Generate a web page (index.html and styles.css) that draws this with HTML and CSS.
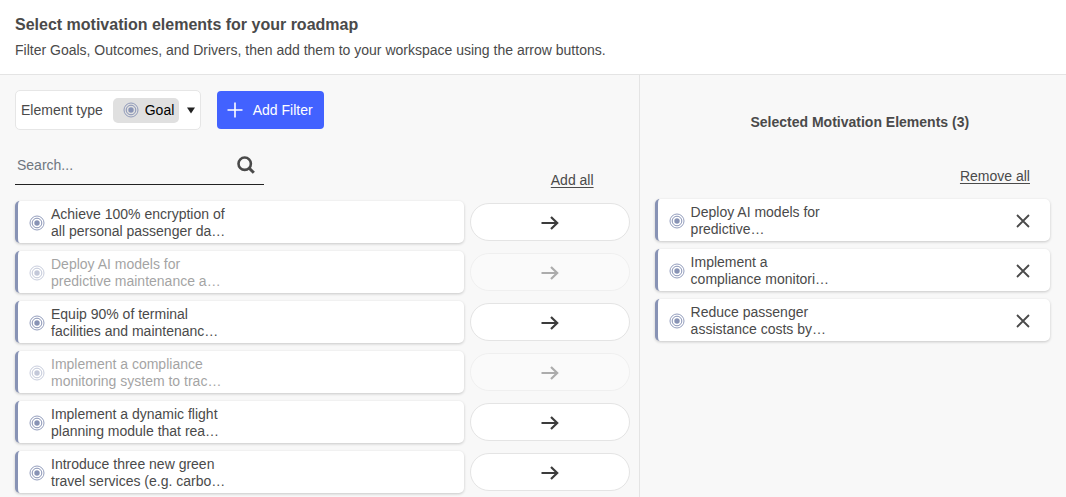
FILE: index.html
```
<!DOCTYPE html>
<html lang="en">
<head>
<meta charset="utf-8">
<meta name="viewport" content="width=device-width, initial-scale=1">
<title>Select motivation elements</title>
<link rel="stylesheet" href="styles.css">
</head>

<body>
<!-- shared icons -->
<svg class="sprite" aria-hidden="true">
  <symbol id="goal" viewBox="0 0 16 16">
    <circle cx="8" cy="8" r="7" fill="none" stroke="currentColor" stroke-width="0.9"/>
    <circle cx="8" cy="8" r="4.8" fill="none" stroke="currentColor" stroke-width="1"/>
    <circle cx="8" cy="8" r="2.7" fill="currentColor"/>
  </symbol>
  <symbol id="arrow" viewBox="0 0 18 14">
    <path d="M0.5 7H16.5M10 1L16.2 7L10 13" fill="none" stroke="currentColor" stroke-width="2.2"/>
  </symbol>
  <symbol id="cross" viewBox="0 0 14 14">
    <path d="M1 1L13 13M13 1L1 13" fill="none" stroke="currentColor" stroke-width="1.8"/>
  </symbol>
</svg>

<header class="header">
  <h1>Select motivation elements for your roadmap</h1>
  <p>Filter Goals, Outcomes, and Drivers, then add them to your workspace using the arrow buttons.</p>
</header>

<main class="columns">
  <section class="available">
    <div class="filters">
      <div class="filter">
        <label for="element-type">Element type</label>
        <span class="chip">
          <svg class="goal"><use href="#goal"/></svg>
          <select id="element-type">
            <option>Goal</option>
          </select>
        </span>
        <svg class="caret" viewBox="0 0 8 7"><path d="M0 0.5H8L4 6.5Z" fill="#222"/></svg>
      </div>
      <button class="add_filter" type="button">
        <svg viewBox="0 0 16 16"><path d="M8 0.5V15.5M0.5 8H15.5" stroke="#fff" stroke-width="1.6"/></svg>
        Add Filter
      </button>
    </div>

    <div class="tools">
      <form class="search">
        <input type="text" placeholder="Search..." aria-label="Search">
        <button type="button" aria-label="Search">
          <svg viewBox="0 0 18 18"><circle cx="7.7" cy="7.7" r="6.2" fill="none" stroke="currentColor" stroke-width="2.6"/><path d="M12 12L16.8 16.8" stroke="currentColor" stroke-width="3"/></svg>
        </button>
      </form>
      <a class="add_all" href="#">Add all</a>
    </div>

    <ul class="list">
      <li class="row">
        <div class="card"><svg class="goal"><use href="#goal"/></svg><p>Achieve 100% encryption of<br>all personal passenger da…</p></div>
        <button class="move" type="button" aria-label="Add"><svg><use href="#arrow"/></svg></button>
      </li>
      <li class="row used">
        <div class="card"><svg class="goal"><use href="#goal"/></svg><p>Deploy AI models for<br>predictive maintenance a…</p></div>
        <button class="move" type="button" aria-label="Add" disabled><svg><use href="#arrow"/></svg></button>
      </li>
      <li class="row">
        <div class="card"><svg class="goal"><use href="#goal"/></svg><p>Equip 90% of terminal<br>facilities and maintenanc…</p></div>
        <button class="move" type="button" aria-label="Add"><svg><use href="#arrow"/></svg></button>
      </li>
      <li class="row used">
        <div class="card"><svg class="goal"><use href="#goal"/></svg><p>Implement a compliance<br>monitoring system to trac…</p></div>
        <button class="move" type="button" aria-label="Add" disabled><svg><use href="#arrow"/></svg></button>
      </li>
      <li class="row">
        <div class="card"><svg class="goal"><use href="#goal"/></svg><p>Implement a dynamic flight<br>planning module that rea…</p></div>
        <button class="move" type="button" aria-label="Add"><svg><use href="#arrow"/></svg></button>
      </li>
      <li class="row">
        <div class="card"><svg class="goal"><use href="#goal"/></svg><p>Introduce three new green<br>travel services (e.g. carbo…</p></div>
        <button class="move" type="button" aria-label="Add"><svg><use href="#arrow"/></svg></button>
      </li>
    </ul>
  </section>

  <section class="selected">
    <h2>Selected Motivation Elements (3)</h2>
    <a class="remove_all" href="#">Remove all</a>
    <ul class="list">
      <li class="card">
        <svg class="goal"><use href="#goal"/></svg><p>Deploy AI models for<br>predictive…</p>
        <button class="remove" type="button" aria-label="Remove"><svg><use href="#cross"/></svg></button>
      </li>
      <li class="card">
        <svg class="goal"><use href="#goal"/></svg><p>Implement a<br>compliance monitori…</p>
        <button class="remove" type="button" aria-label="Remove"><svg><use href="#cross"/></svg></button>
      </li>
      <li class="card">
        <svg class="goal"><use href="#goal"/></svg><p>Reduce passenger<br>assistance costs by…</p>
        <button class="remove" type="button" aria-label="Remove"><svg><use href="#cross"/></svg></button>
      </li>
    </ul>
  </section>
</main>
</body>
</html>
```
FILE: styles.css
```
* {
  box-sizing: border-box;
}
body {
  margin: 0;
  min-height: 100vh;
  display: flex;
  flex-direction: column;
  background: #f8f8f8;
  color: #4a4a4a;
  font-family: "Liberation Sans", Arial, sans-serif;
  font-size: 14px;
  line-height: 17px;
}
h1, h2, p, ul {
  margin: 0;
  padding: 0;
}
button, input, select {
  font: inherit;
  color: inherit;
  margin: 0;
  padding: 0;
  border: none;
  background: none;
}
button {
  cursor: pointer;
}
a {
  color: inherit;
  text-underline-offset: 2px;
}
svg {
  display: block;
  flex: none;
}
.sprite {
  display: none;
}

.header {
  padding: 15px 15px 15px;
  background: #fff;
  border-bottom: 1px solid #e4e4e4;
}
.header h1 {
  font-size: 16px;
  line-height: 20px;
}
.header p {
  margin-top: 7px;
}

.columns {
  flex: 1;
  display: grid;
  grid-template-columns: 3fr 2fr;
}
.available {
  padding: 15px 9px 4px 15px;
  border-right: 1px solid #e4e4e4;
}
.selected {
  display: flex;
  flex-direction: column;
  padding: 39px 16px 4px 15px;
}

.filters {
  display: flex;
  align-items: center;
  gap: 16px;
}
.filter {
  display: flex;
  align-items: center;
  height: 40px;
  padding: 0 5px;
  background: #fff;
  border: 1px solid #e6e6e6;
  border-radius: 5px;
}
.chip {
  display: flex;
  align-items: center;
  gap: 6px;
  height: 25px;
  margin: 0 8px 0 10px;
  padding: 0 4px 0 10px;
  background: #e0e0e0;
  border-radius: 5px;
}
.chip select {
  appearance: none;
  color: #000;
}
.caret {
  width: 8px;
  height: 7px;
}
.goal {
  width: 16px;
  height: 16px;
  color: #8893b5;
}
.add_filter {
  display: flex;
  align-items: center;
  gap: 10px;
  height: 38px;
  padding: 0 11px 0 10px;
  background: #4262ff;
  border-radius: 4px;
  color: #fff;
}
.add_filter svg {
  width: 16px;
  height: 16px;
}

.tools {
  display: flex;
  align-items: flex-end;
  justify-content: space-between;
  margin: 15px 36px 16px 0;
}
.search {
  display: flex;
  align-items: center;
  width: 249px;
  height: 40px;
  padding: 0 9px 0 2px;
  border-bottom: 1px solid #222;
}
.search input {
  flex: 1;
  min-width: 0;
  padding-top: 2px;
  outline: none;
}
.search input::placeholder {
  color: #6f7680;
}
.search svg {
  width: 18px;
  height: 18px;
}
.add_all {
  margin-bottom: -4px;
}

.list {
  display: flex;
  flex-direction: column;
  gap: 8px;
  list-style: none;
}
.row {
  display: flex;
  align-items: center;
  gap: 6px;
}
.card {
  flex: 1;
  display: flex;
  align-items: center;
  gap: 6px;
  height: 42px;
  padding: 2px 0 0 11px;
  background: #fff;
  border-left: 3px solid #8893b5;
  border-radius: 5px;
  box-shadow: 0 1px 3px rgba(0, 0, 0, 0.2);
}
.selected .card {
  flex: none;
  padding-right: 20px;
}
.move {
  display: flex;
  align-items: center;
  justify-content: center;
  width: 160px;
  height: 38px;
  padding-top: 2px;
  background: #fff;
  border: 1px solid #e4e4e4;
  border-radius: 19px;
  color: #3c3c3c;
}
.move svg {
  width: 18px;
  height: 14px;
}
.used .card > * {
  opacity: 0.5;
}
.used .move {
  opacity: 0.4;
  cursor: default;
}

.selected h2 {
  padding-left: 15px;
  font-size: 14px;
  line-height: 17px;
  text-align: center;
}
.remove_all {
  align-self: flex-end;
  margin: 37px 20px 14px 0;
}
.remove {
  margin-left: auto;
}
.remove svg {
  width: 14px;
  height: 14px;
}
```
